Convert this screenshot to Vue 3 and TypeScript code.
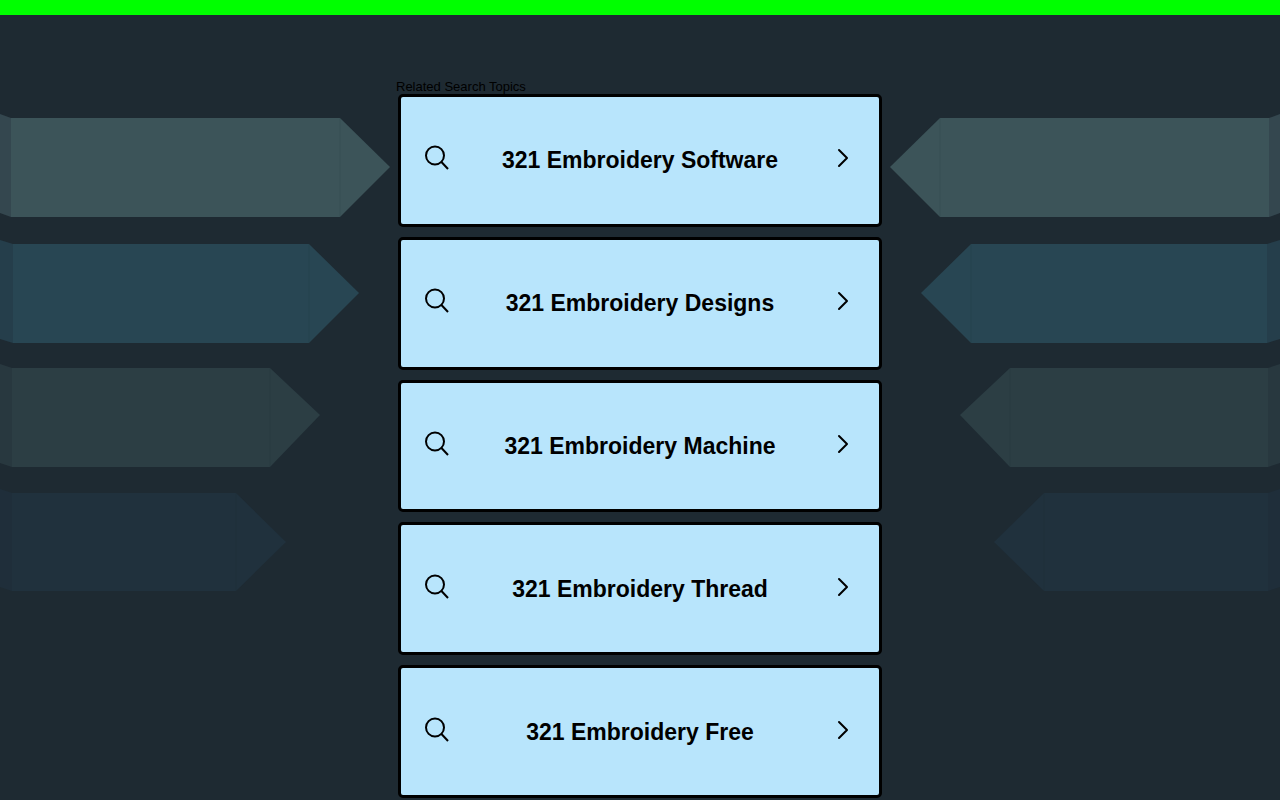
<script setup lang="ts">
interface Arrow {
  top: number
  bottom: number
  edge: number
  shoulder: number
  tip: number
  tipY: number
  face: string
  side: string
}

const topics: string[] = [
  '321 Embroidery Software',
  '321 Embroidery Designs',
  '321 Embroidery Machine',
  '321 Embroidery Thread',
  '321 Embroidery Free',
]

const arrows: Arrow[] = [
  { top: 118, bottom: 217, edge: 11, shoulder: 340, tip: 390, tipY: 167, face: '#3c5459', side: '#34474f' },
  { top: 244, bottom: 343, edge: 13, shoulder: 309, tip: 359, tipY: 293, face: '#284653', side: '#253e4b' },
  { top: 368, bottom: 467, edge: 12, shoulder: 270, tip: 320, tipY: 415, face: '#2c3e44', side: '#28383f' },
  { top: 493, bottom: 591, edge: 12, shoulder: 236, tip: 286, tipY: 542, face: '#20313d', side: '#1f2e3a' },
]

const facePoints = (a: Arrow): string =>
  `${a.edge},${a.top} ${a.shoulder},${a.top} ${a.tip},${a.tipY} ${a.shoulder},${a.bottom} ${a.edge},${a.bottom}`

const sidePoints = (a: Arrow): string =>
  `0,${a.top - 4} ${a.edge},${a.top} ${a.edge},${a.bottom} 0,${a.bottom - 4}`
</script>

<template>
  <div class="page">
    <svg
      v-for="place in ['left', 'right']"
      :key="place"
      class="arrows"
      :class="place"
      width="390"
      height="600"
      viewBox="0 0 390 600"
      aria-hidden="true"
    >
      <g v-for="a in arrows" :key="a.top">
        <polygon :points="sidePoints(a)" :fill="a.side" />
        <polygon :points="facePoints(a)" :fill="a.face" />
        <path
          :d="`M${a.shoulder} ${a.top}V${a.bottom}`"
          stroke="#1e2a32"
          stroke-opacity="0.1"
        />
      </g>
    </svg>
    <div class="banner"></div>
    <main class="content">
      <h1 class="heading">Related Search Topics</h1>
      <ul class="topics">
        <li v-for="topic in topics" :key="topic" class="item">
          <a class="card" href="#">
            <svg class="icon" width="26" height="26" viewBox="0 0 26 26" fill="none" stroke="#000" stroke-width="2" aria-hidden="true">
              <circle cx="11" cy="10.500" r="9" />
              <path d="M17 16.500L24 24" />
            </svg>
            <span class="label">{{ topic }}</span>
            <svg class="icon" width="26" height="26" viewBox="0 0 26 26" fill="none" stroke="#000" stroke-width="2" stroke-linecap="round" stroke-linejoin="round" aria-hidden="true">
              <path d="M9 5L17 13L9 21" />
            </svg>
          </a>
        </li>
      </ul>
    </main>
  </div>
</template>

<style>
body {
  margin: 0;
  background: #1e2a32;
}
</style>

<style scoped>
.page {
  position: relative;
  display: flex;
  flex-direction: column;
  box-sizing: border-box;
  min-height: 100vh;
  padding-bottom: 2px;
  overflow: hidden;
  background: #1e2a32;
  color: #000;
  font-family: "Liberation Sans", Arial, sans-serif;
}

.arrows {
  position: absolute;
  top: 0;
}

.left {
  left: 0;
}

.right {
  right: 0;
  transform: scaleX(-1);
}

.banner {
  height: 15px;
  background: #0f0;
}

.content {
  position: relative;
  display: flex;
  flex: 1;
  flex-direction: column;
  width: 100%;
  max-width: 488px;
  margin: 0 auto;
  padding-top: 64px;
}

.heading {
  margin: 0;
  font-size: 13px;
  font-weight: 400;
  line-height: 15px;
}

.topics {
  display: grid;
  flex: 1;
  grid-auto-rows: 1fr;
  gap: 10px;
  margin: 0;
  padding: 0 2px;
  list-style: none;
}

.item {
  display: grid;
}

.card {
  display: flex;
  align-items: center;
  padding: 24px 23px;
  border: 3px solid #000;
  border-radius: 5px;
  background: #b8e5fc;
  color: #000;
  text-decoration: none;
}

.icon {
  flex: none;
  margin-bottom: 4px;
}

.label {
  flex: 1;
  text-align: center;
  font-size: 23px;
  font-weight: 700;
  line-height: 28px;
}
</style>
